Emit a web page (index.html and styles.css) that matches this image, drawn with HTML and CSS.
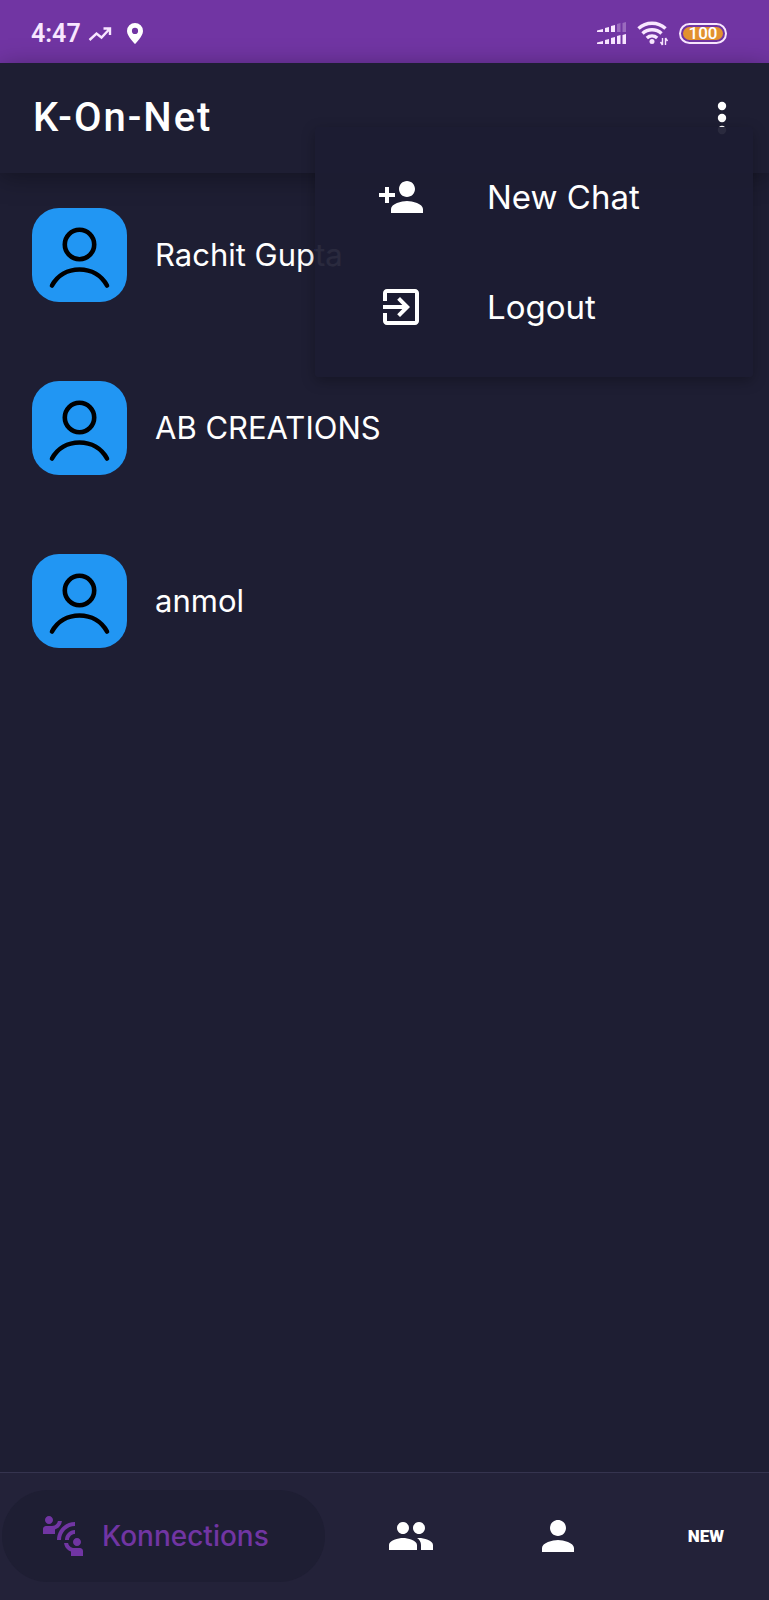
FILE: index.html
```html
<!DOCTYPE html>
<html lang="en">
<head>
<meta charset="utf-8">
<meta name="viewport" content="width=device-width, initial-scale=1">
<title>K-On-Net</title>
<link rel="stylesheet" href="styles.css">
</head>
<body>
<svg class="symbols" aria-hidden="true">
  <symbol id="user" viewBox="0 0 94 94">
    <circle cx="47" cy="36.5" r="14.7"/>
    <path d="M19.5 77.5C25 67.5 35 61.5 47 61.5s22 6 27.500 16"/>
  </symbol>
</svg>
<div class="status">
  <div class="status-group">
    <span class="time">4:47</span>
    <svg class="trend" viewBox="0 0 24 16" aria-hidden="true"><path d="M1.500 14 8.500 7.500l5 4L21 3.500M15.500 2.500h6.500v6.500"/></svg>
    <svg class="pin" viewBox="0 0 18 23" aria-hidden="true"><path fill-rule="evenodd" d="M9 1a8 8 0 0 0-8 8c0 5.500 8 13 8 13s8-7.500 8-13a8 8 0 0 0-8-8zm0 4.800a3.100 3.100 0 1 1 0 6.200 3.100 3.100 0 0 1 0-6.200z"/></svg>
  </div>
  <div class="status-group status-right">
    <svg class="signal" viewBox="0 0 30 24" aria-hidden="true">
      <path d="M0 8.500 6 7v3H0zM8 6l4-1v5H8zM14 4l4-1v7h-4zM0 20.500 6 19v3H0zM8 18l4-1v5H8zM14 16l4-1v7h-4zM20 14l3.500-1v9H20zM25.500 13l3.500-1v10h-3.500z"/>
      <path opacity=".3" d="M20 2l3.500-1v9H20zM25.500 1l3.500-1v10h-3.500z"/>
    </svg>
    <svg class="wifi" viewBox="0 0 32 25" aria-hidden="true">
      <path class="wifi-waves" d="M1.500 7.500a20 20 0 0 1 27 0M5.500 12.500a14 14 0 0 1 19 0M9.800 17a8 8 0 0 1 10.400 0"/>
      <circle cx="15" cy="20.500" r="2.500"/>
      <path class="wifi-data" d="M25.500 17v7M28.500 17v7M23.500 21l2 3M30.500 20l-2-3"/>
    </svg>
    <span class="battery"><span class="battery-level">100</span></span>
  </div>
</div>
<header class="appbar">
  <h1 class="title">K-On-Net</h1>
  <button class="more" type="button" aria-label="More options" aria-haspopup="menu" aria-expanded="true">
    <svg class="icon" viewBox="0 0 24 24" aria-hidden="true"><circle cx="12" cy="6" r="2.100"/><circle cx="12" cy="12" r="2.100"/><circle cx="12" cy="18" r="2.100"/></svg>
  </button>
  <div class="menu" role="menu">
    <button class="menu-item" type="button" role="menuitem">
      <svg class="icon" viewBox="0 0 24 24" aria-hidden="true"><path d="M15 12c2.210 0 4-1.790 4-4s-1.790-4-4-4-4 1.790-4 4 1.790 4 4 4zm-9-2V7H4v3H1v2h3v3h2v-3h3v-2H6zm9 4c-2.670 0-8 1.340-8 4v2h16v-2c0-2.660-5.330-4-8-4z"/></svg>
      <span>New Chat</span>
    </button>
    <button class="menu-item" type="button" role="menuitem">
      <svg class="icon" viewBox="0 0 24 24" aria-hidden="true"><path d="M10.090 15.590L11.500 17l5-5-5-5-1.410 1.410L12.670 11H3v2h9.670l-2.580 2.590zM19 3H5c-1.110 0-2 .9-2 2v4h2V5h14v14H5v-4H3v4c0 1.100.89 2 2 2h14c1.100 0 2-.9 2-2V5c0-1.100-.9-2-2-2z"/></svg>
      <span>Logout</span>
    </button>
  </div>
</header>
<main class="content">
  <ul class="contacts">
    <li class="contact"><svg class="avatar" aria-hidden="true"><use href="#user"/></svg><span>Rachit Gupta</span></li>
    <li class="contact"><svg class="avatar" aria-hidden="true"><use href="#user"/></svg><span>AB CREATIONS</span></li>
    <li class="contact"><svg class="avatar" aria-hidden="true"><use href="#user"/></svg><span>anmol</span></li>
  </ul>
</main>
<nav class="tabs" aria-label="Main">
  <button class="tab tab-active" type="button" aria-current="page">
    <svg class="icon" viewBox="0 0 24 24" aria-hidden="true"><path d="M11 14H9c0-4.970 4.030-9 9-9v2c-3.870 0-7 3.130-7 7zm7-3V9c-2.760 0-5 2.240-5 5h2c0-1.660 1.340-3 3-3zM7 4c0-1.110-.89-2-2-2s-2 .89-2 2 .89 2 2 2 2-.89 2-2zm4.450.5h-2C9.210 5.920 7.990 7 6.500 7h-3C2.670 7 2 7.670 2 8.500V11h6V8.740c1.860-.59 3.250-2.230 3.450-4.240zM19 17c1.110 0 2-.89 2-2s-.89-2-2-2-2 .89-2 2 .89 2 2 2zm1.500 1h-3c-1.490 0-2.710-1.080-2.950-2.500h-2c.2 2.010 1.590 3.650 3.450 4.240V22h6v-2.500c0-.83-.67-1.500-1.500-1.500z"/></svg>
    <span>Konnections</span>
  </button>
  <button class="tab" type="button" aria-label="Groups">
    <svg class="icon" viewBox="0 0 24 24" aria-hidden="true"><path d="M16 11c1.660 0 2.990-1.340 2.990-3S17.660 5 16 5s-3 1.340-3 3 1.340 3 3 3zm-8 0c1.660 0 2.990-1.340 2.990-3S9.660 5 8 5 5 6.340 5 8s1.340 3 3 3zm0 2c-2.330 0-7 1.170-7 3.500V19h14v-2.500c0-2.330-4.670-3.500-7-3.500zm8 0c-.29 0-.62.02-.97.05 1.160.84 1.970 1.970 1.970 3.450V19h6v-2.500c0-2.330-4.670-3.500-7-3.500z"/></svg>
  </button>
  <button class="tab" type="button" aria-label="Profile">
    <svg class="icon" viewBox="0 0 24 24" aria-hidden="true"><path d="M12 12c2.210 0 4-1.790 4-4s-1.790-4-4-4-4 1.790-4 4 1.790 4 4 4zm0 2c-2.670 0-8 1.340-8 4v2h16v-2c0-2.660-5.330-4-8-4z"/></svg>
  </button>
  <button class="tab tab-new" type="button">NEW</button>
</nav>
</body>
</html>
```
FILE: styles.css
```css
* {
  box-sizing: border-box;
}

body {
  display: flex;
  flex-direction: column;
  min-height: 100vh;
  margin: 0;
  background: #1e1e33;
  color: #fff;
  font-family: Inter, Roboto, sans-serif;
}

button {
  padding: 0;
  border: 0;
  background: none;
  color: inherit;
  font: inherit;
  cursor: pointer;
}

.symbols {
  position: absolute;
  width: 0;
  height: 0;
}

.icon {
  flex: none;
  display: block;
  width: 48px;
  height: 48px;
  fill: currentColor;
}

/* Status bar */
.status {
  display: flex;
  align-items: center;
  justify-content: space-between;
  height: 63px;
  padding: 4px 42px 0 31px;
  background: #7135a3;
  color: #f8e6ff;
  font-family: Roboto, sans-serif;
}

.status-group {
  display: flex;
  align-items: center;
}

.status-right {
  gap: 10px;
}

.time {
  font-size: 25px;
  font-weight: 600;
  line-height: 28px;
}

.trend {
  width: 24px;
  height: 16px;
  margin-left: 7px;
  fill: none;
  stroke: currentColor;
  stroke-width: 2.4;
}

.pin {
  width: 18px;
  height: 23px;
  margin-left: 14px;
  fill: #fff;
}

.signal {
  width: 30px;
  height: 24px;
  fill: currentColor;
}

.wifi {
  width: 32px;
  height: 25px;
  fill: currentColor;
}

.wifi-waves {
  fill: none;
  stroke: currentColor;
  stroke-width: 3.5;
}

.wifi-data {
  fill: none;
  stroke: currentColor;
  stroke-width: 1.4;
}

.battery {
  width: 48px;
  height: 21px;
  padding: 2px;
  border: 2px solid #f8e6ff;
  border-radius: 11px;
}

.battery-level {
  display: block;
  border-radius: 7px;
  background: #e2912f;
  color: #fff;
  font-size: 17px;
  font-weight: 500;
  line-height: 13px;
  text-align: center;
}

/* App bar */
.appbar {
  position: relative;
  z-index: 1;
  display: flex;
  align-items: center;
  justify-content: space-between;
  height: 110px;
  padding: 0 23px 0 33px;
  background: #1e1e33;
  box-shadow: 0 4px 24px rgba(0, 0, 0, 0.35);
}

.title {
  margin: 0;
  font-family: Roboto, sans-serif;
  font-size: 40px;
  font-weight: 500;
  line-height: 48px;
  letter-spacing: 2px;
}

.menu {
  position: absolute;
  top: 64px;
  right: 16px;
  width: 438px;
  padding: 15px 0;
  border-radius: 4px;
  background: rgba(29, 29, 50, 0.94);
  box-shadow: 0 4px 14px rgba(0, 0, 0, 0.28);
}

.menu-item {
  display: flex;
  align-items: center;
  gap: 62px;
  width: 100%;
  height: 110px;
  padding: 0 62px;
  font-size: 33px;
  line-height: 40px;
}

/* Contact list */
.content {
  flex: 1;
}

.contacts {
  display: flex;
  flex-direction: column;
  gap: 79px;
  margin: 0;
  padding: 35px 32px;
  list-style: none;
}

.contact {
  display: flex;
  align-items: center;
  gap: 28px;
  font-size: 31px;
  line-height: 40px;
}

.avatar {
  flex: none;
  width: 95px;
  height: 94px;
  border-radius: 27px;
  background: #2196f3;
  fill: none;
  stroke: #000;
  stroke-width: 4.6;
  stroke-linecap: round;
}

/* Bottom navigation */
.tabs {
  display: flex;
  align-items: center;
  justify-content: space-between;
  height: 128px;
  padding: 0 1px 2px 2px;
  border-top: 1px solid #35344f;
  background: #232239;
}

.tab {
  display: flex;
  align-items: center;
  justify-content: center;
  width: 124px;
  height: 92px;
}

.tab-active {
  justify-content: flex-start;
  gap: 15px;
  width: auto;
  padding: 0 56px 0 37px;
  border-radius: 46px;
  background: #1e1e33;
  color: #7135a3;
  font-size: 28px;
  font-weight: 500;
}

.tab-new {
  font-family: Roboto, sans-serif;
  font-size: 17px;
  font-weight: 900;
}
```
